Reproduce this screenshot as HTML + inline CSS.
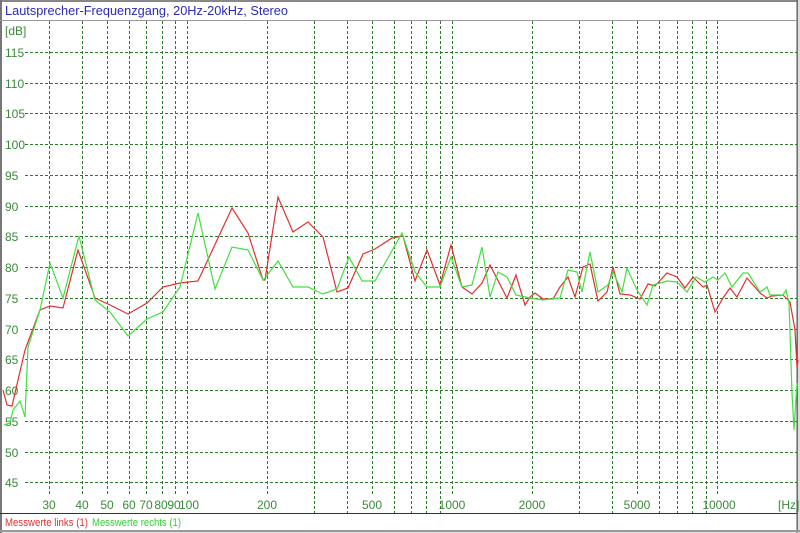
<!DOCTYPE html>
<html><head><meta charset="utf-8"><style>
html,body{margin:0;padding:0;background:#fff;}
svg{display:block;}
</style></head><body>
<svg width="800" height="533" viewBox="0 0 800 533" xmlns="http://www.w3.org/2000/svg" font-family="Liberation Sans, sans-serif">
<rect x="0" y="0" width="800" height="533" fill="#fff"/>
<rect x="0.5" y="0.5" width="797" height="531" fill="none" stroke="#8a8a8a" stroke-width="1.5"/>
<line x1="0" y1="1" x2="800" y2="1" stroke="#888" stroke-width="2"/>
<line x1="1" y1="0" x2="1" y2="533" stroke="#777" stroke-width="2"/>
<line x1="797" y1="0" x2="797" y2="533" stroke="#555" stroke-width="1"/>
<rect x="798" y="0" width="2" height="533" fill="#ddd"/>
<line x1="0" y1="20.5" x2="797" y2="20.5" stroke="#999" stroke-width="1"/>
<line x1="0" y1="513.5" x2="797" y2="513.5" stroke="#333" stroke-width="1"/>
<line x1="0" y1="531" x2="800" y2="531" stroke="#999" stroke-width="2"/>
<text x="5" y="15" font-size="13" fill="#2a2ab8" textLength="283" lengthAdjust="spacingAndGlyphs">Lautsprecher-Frequenzgang, 20Hz-20kHz, Stereo</text>
<g stroke="#2a7a2a" stroke-width="1" stroke-dasharray="3,2" fill="none">
<path d="M25 52.5H797M25 83.5H797M25 113.5H797M25 144.5H797M25 175.5H797M25 206.5H797M25 236.5H797M25 267.5H797M25 298.5H797M25 329.5H797M25 359.5H797M25 390.5H797M25 421.5H797M25 452.5H797M25 482.5H797"/>
<path d="M49.5 21V495M82.5 21V495M107.5 21V495M129.5 21V495M146.5 21V495M162.5 21V495M175.5 21V495M187.5 21V495M267.5 21V495M314.5 21V513M347.5 21V513M372.5 21V495M394.5 21V513M411.5 21V513M426.5 21V513M440.5 21V513M452.5 21V495M532.5 21V495M579.5 21V513M612.5 21V513M637.5 21V495M659.5 21V513M677.5 21V513M692.5 21V513M706.5 21V513M717.5 21V495"/>
</g>
<g font-size="12" fill="#3a8a3a">
<text x="5" y="35">[dB]</text>
<text x="5" y="57">115</text><text x="5" y="88">110</text><text x="5" y="118">105</text><text x="5" y="149">100</text>
<text x="5" y="180">95</text><text x="5" y="211">90</text><text x="5" y="241">85</text><text x="5" y="272">80</text>
<text x="5" y="303">75</text><text x="5" y="334">70</text><text x="5" y="364">65</text><text x="5" y="395">60</text>
<text x="5" y="426">55</text><text x="5" y="457">50</text><text x="5" y="487">45</text>
<g text-anchor="middle">
<text x="49" y="509">30</text><text x="82" y="509">40</text><text x="107" y="509">50</text><text x="129" y="509">60</text>
<text x="146" y="509">70</text><text x="161" y="509">80</text><text x="174" y="509">90</text><text x="189" y="509">100</text>
<text x="267" y="509">200</text><text x="372" y="509">500</text><text x="452" y="509">1000</text><text x="532" y="509">2000</text>
<text x="637" y="509">5000</text><text x="719" y="509">10000</text>
</g>
<text x="778" y="509">[Hz]</text>
</g>
<polyline fill="none" stroke="#e03030" stroke-width="1.2" points="3,390 7,405 12,406 25,350 40,310 50,306 63,308 78,250 95,298 110,305 128,314 147,303 163,287 180,283 198,281 232,208 248,233 263,280 265,280 278,197 293,232 308,222 323,237 337,292 348,288 363,254 375,249 392,238 403,236 415,281 427,250 440,285 451,245 462,287 472,294 482,283 490,265 507,298 516,275 525,305 530,297 535,293 543,299 553,299 560,287 568,277 575,297 583,267 590,264 598,301 607,292 613,267 620,294 630,295 640,299 648,284 655,286 667,273 677,277 685,288 693,277 703,287 707,285 715,312 723,298 730,288 737,297 747,278 760,293 767,298 772,296 783,295 790,302 795,330 797,367 798,360"/>
<polyline fill="none" stroke="#40e040" stroke-width="1.2" points="4,425 10,423 13,410 20,401 25,417 28,347 40,310 50,263 63,298 79,236 95,300 110,312 128,336 147,319 163,312 180,287 198,213 215,289 232,247 248,250 263,280 265,278 278,261 293,287 308,287 323,294 337,289 349,257 362,281 375,281 402,233 415,272 427,287 440,287 451,257 462,287 472,285 482,247 490,297 498,272 507,277 516,295 530,298 543,300 560,298 568,270 577,272 582,292 590,252 598,292 608,285 613,272 622,292 627,268 637,290 647,305 653,285 667,281 677,282 687,292 696,277 705,282 713,277 718,280 725,273 732,287 743,273 748,273 760,292 767,287 770,295 783,295 786,290 789,303 792,393 794,430 797,383"/>
<text x="5" y="526" font-size="11" fill="#e03030" textLength="83" lengthAdjust="spacingAndGlyphs">Messwerte links (1)</text>
<text x="92" y="526" font-size="11" fill="#30d030" textLength="89" lengthAdjust="spacingAndGlyphs">Messwerte rechts (1)</text>
</svg>
</body></html>
